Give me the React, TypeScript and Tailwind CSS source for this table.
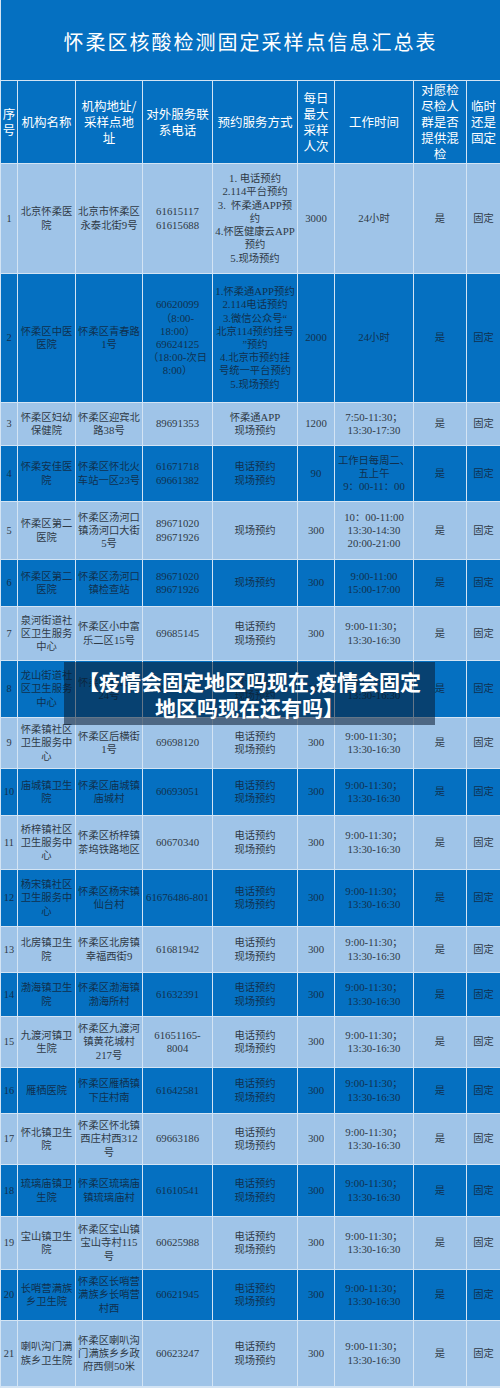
type Row = {
  n: number;
  name: string[];
  addr: string[];
  phone: string[];
  book: string[];
  cap: string;
  time: string[];
  h: string;
};

const WEEK = ["电话预约", "现场预约"];
const STD = ["9:00-11:30；", "13:30-16:30"];

const rows: Row[] = [
  {
    n: 1,
    name: ["北京怀柔医", "院"],
    addr: ["北京市怀柔区", "永泰北街9号"],
    phone: ["61615117", "61615688"],
    book: ["1. 电话预约", "2.114平台预约", "3.  怀柔通APP预", "约", "4.怀医健康云APP", "预约", "5.现场预约"],
    cap: "3000",
    time: ["24小时"],
    h: "h-[109px]",
  },
  {
    n: 2,
    name: ["怀柔区中医", "医院"],
    addr: ["怀柔区青春路", "1号"],
    phone: ["60620099", "（8:00-", "18:00）", "69624125", "（18:00-次日", "8:00）"],
    book: ["1.怀柔通APP预约", "2.114电话预约", "3.微信公众号“", "北京114预约挂号", "”预约", "4.北京市预约挂", "号统一平台预约", "5.现场预约"],
    cap: "2000",
    time: ["24小时"],
    h: "h-[128px]",
  },
  {
    n: 3,
    name: ["怀柔区妇幼", "保健院"],
    addr: ["怀柔区迎宾北", "路38号"],
    phone: ["89691353"],
    book: ["怀柔通APP", "现场预约"],
    cap: "1200",
    time: ["7:50-11:30；", "13:30-17:30"],
    h: "h-[42px]",
  },
  {
    n: 4,
    name: ["怀柔安佳医", "院"],
    addr: ["怀柔区怀北火", "车站一区23号"],
    phone: ["61671718", "69661382"],
    book: WEEK,
    cap: "90",
    time: ["工作日每周二、", "五上午", "9：00-11：00"],
    h: "h-[55px]",
  },
  {
    n: 5,
    name: ["怀柔区第二", "医院"],
    addr: ["怀柔区汤河口", "镇汤河口大街", "5号"],
    phone: ["89671020", "89671926"],
    book: ["现场预约"],
    cap: "300",
    time: ["10：00-11:00", "13:30-14:30", "20:00-21:00"],
    h: "h-[57px]",
  },
  {
    n: 6,
    name: ["怀柔区第二", "医院"],
    addr: ["怀柔区汤河口", "镇检查站"],
    phone: ["89671020", "89671926"],
    book: ["现场预约"],
    cap: "300",
    time: ["9:00-11:00", "15:00-17:00"],
    h: "h-[46px]",
  },
  {
    n: 7,
    name: ["泉河街道社", "区卫生服务", "中心"],
    addr: ["怀柔区小中富", "乐二区15号"],
    phone: ["69685145"],
    book: WEEK,
    cap: "300",
    time: STD,
    h: "h-[53px]",
  },
  {
    n: 8,
    name: ["龙山街道社", "区卫生服务", "中心"],
    addr: ["怀柔区龙山街", "24号"],
    phone: ["69647901"],
    book: WEEK,
    cap: "300",
    time: STD,
    h: "h-[56px]",
  },
  {
    n: 9,
    name: ["怀柔镇社区", "卫生服务中", "心"],
    addr: ["怀柔区后横街", "1号"],
    phone: ["69698120"],
    book: WEEK,
    cap: "300",
    time: STD,
    h: "h-[50px]",
  },
  {
    n: 10,
    name: ["庙城镇卫生", "院"],
    addr: ["怀柔区庙城镇", "庙城村"],
    phone: ["60693051"],
    book: WEEK,
    cap: "300",
    time: STD,
    h: "h-[46px]",
  },
  {
    n: 11,
    name: ["桥梓镇社区", "卫生服务中", "心"],
    addr: ["怀柔区桥梓镇", "茶坞铁路地区"],
    phone: ["60670340"],
    book: WEEK,
    cap: "300",
    time: STD,
    h: "h-[53px]",
  },
  {
    n: 12,
    name: ["杨宋镇社区", "卫生服务中", "心"],
    addr: ["怀柔区杨宋镇", "仙台村"],
    phone: ["61676486-801"],
    book: WEEK,
    cap: "300",
    time: STD,
    h: "h-[56px]",
  },
  {
    n: 13,
    name: ["北房镇卫生", "院"],
    addr: ["怀柔区北房镇", "幸福西街9"],
    phone: ["61681942"],
    book: WEEK,
    cap: "300",
    time: STD,
    h: "h-[45px]",
  },
  {
    n: 14,
    name: ["渤海镇卫生", "院"],
    addr: ["怀柔区渤海镇", "渤海所村"],
    phone: ["61632391"],
    book: WEEK,
    cap: "300",
    time: STD,
    h: "h-[43px]",
  },
  {
    n: 15,
    name: ["九渡河镇卫", "生院"],
    addr: ["怀柔区九渡河", "镇黄花城村", "217号"],
    phone: ["61651165-", "8004"],
    book: WEEK,
    cap: "300",
    time: STD,
    h: "h-[50px]",
  },
  {
    n: 16,
    name: ["雁栖医院"],
    addr: ["怀柔区雁栖镇", "下庄村南"],
    phone: ["61642581"],
    book: WEEK,
    cap: "300",
    time: STD,
    h: "h-[45px]",
  },
  {
    n: 17,
    name: ["怀北镇卫生", "院"],
    addr: ["怀柔区怀北镇", "西庄村西312", "号"],
    phone: ["69663186"],
    book: WEEK,
    cap: "300",
    time: STD,
    h: "h-[50px]",
  },
  {
    n: 18,
    name: ["琉璃庙镇卫", "生院"],
    addr: ["怀柔区琉璃庙", "镇琉璃庙村"],
    phone: ["61610541"],
    book: WEEK,
    cap: "300",
    time: STD,
    h: "h-[51px]",
  },
  {
    n: 19,
    name: ["宝山镇卫生", "院"],
    addr: ["怀柔区宝山镇", "宝山寺村115", "号"],
    phone: ["60625988"],
    book: WEEK,
    cap: "300",
    time: STD,
    h: "h-[52px]",
  },
  {
    n: 20,
    name: ["长哨营满族", "乡卫生院"],
    addr: ["怀柔区长哨营", "满族乡长哨营", "村西"],
    phone: ["60621945"],
    book: WEEK,
    cap: "300",
    time: STD,
    h: "h-[50px]",
  },
  {
    n: 21,
    name: ["喇叭沟门满", "族乡卫生院"],
    addr: ["怀柔区喇叭沟", "门满族乡乡政", "府西侧50米"],
    phone: ["60623247"],
    book: WEEK,
    cap: "300",
    time: STD,
    h: "h-[65px]",
  },
];

const headers: string[][] = [
  ["序", "号"],
  ["机构名称"],
  ["机构地址/", "采样点地", "址"],
  ["对外服务联", "系电话"],
  ["预约服务方式"],
  ["每日", "最大", "采样", "人次"],
  ["工作时间"],
  ["对愿检", "尽检人", "群是否", "提供混", "检"],
  ["临时", "还是", "固定"],
];

// digits and latin letters sit a bit larger than the CJK text in the sheet
const Mixed = ({ s }: { s: string }) => (
  <>
    {s.split(/([\x21-\x7e]+)/).map((p, i) =>
      i % 2 ? (
        <span key={i} className="text-[10.8px]">
          {p}
        </span>
      ) : (
        p
      )
    )}
  </>
);

const Cell = ({ lines, bg, mixed }: { lines: string[]; bg: string; mixed?: boolean }) => (
  <div className={`flex flex-col items-center justify-center text-center ${bg}`}>
    {lines.map((l, i) => (
      <span key={i} className="whitespace-pre">
        {mixed ? <Mixed s={l} /> : l}
      </span>
    ))}
  </div>
);

const GRID = "grid grid-cols-[16px_57px_66px_69px_84px_36px_78px_52px_33px] gap-px";

export default function App() {
  return (
    <div className="relative flex w-[500px] flex-col gap-px bg-[#d3e4f4] pb-[2px] pl-px">
      <div className="flex h-[80px] items-center justify-center bg-[#0570c1] pt-[3px] font-['Noto_Sans_CJK_SC',sans-serif] text-[20px] tracking-[2px] text-white">
        怀柔区核酸检测固定采样点信息汇总表
      </div>

      <div className={`${GRID} h-[82px] font-['Noto_Sans_CJK_SC',sans-serif] text-[12.5px] leading-[16px] text-white`}>
        {headers.map((h, i) => (
          <Cell key={i} lines={h} bg="bg-[#0570c1]" />
        ))}
      </div>

      {rows.map((r) => {
        const bg = r.n % 2 ? "bg-[#9fc4e8]" : "bg-[#0570c1]";
        const fg = r.n % 2 ? "text-[#2f3a46]" : "text-[#10304f]";
        return (
          <div
            key={r.n}
            className={`${GRID} ${r.h} ${fg} font-['Liberation_Serif','Noto_Sans_CJK_SC',serif] text-[10.3px] leading-[13.2px]`}
          >
            <Cell lines={[String(r.n)]} bg={bg} />
            <Cell lines={r.name} bg={bg} />
            <Cell lines={r.addr} bg={bg} mixed />
            <Cell lines={r.phone} bg={bg} mixed />
            <Cell lines={r.book} bg={bg} mixed />
            <Cell lines={[r.cap]} bg={bg} mixed />
            <Cell lines={r.time} bg={bg} mixed />
            <Cell lines={["是"]} bg={bg} />
            <Cell lines={["固定"]} bg={bg} />
          </div>
        );
      })}

      <div className="absolute left-[64px] top-[662px] flex h-[63px] w-[371px] flex-col items-center justify-center bg-[rgba(10,28,48,0.55)] font-['Noto_Sans_CJK_SC',sans-serif] text-[21px] font-bold leading-[26px] text-white">
        <span>【疫情会固定地区吗现在,疫情会固定</span>
        <span>地区吗现在还有吗】</span>
      </div>
    </div>
  );
}
